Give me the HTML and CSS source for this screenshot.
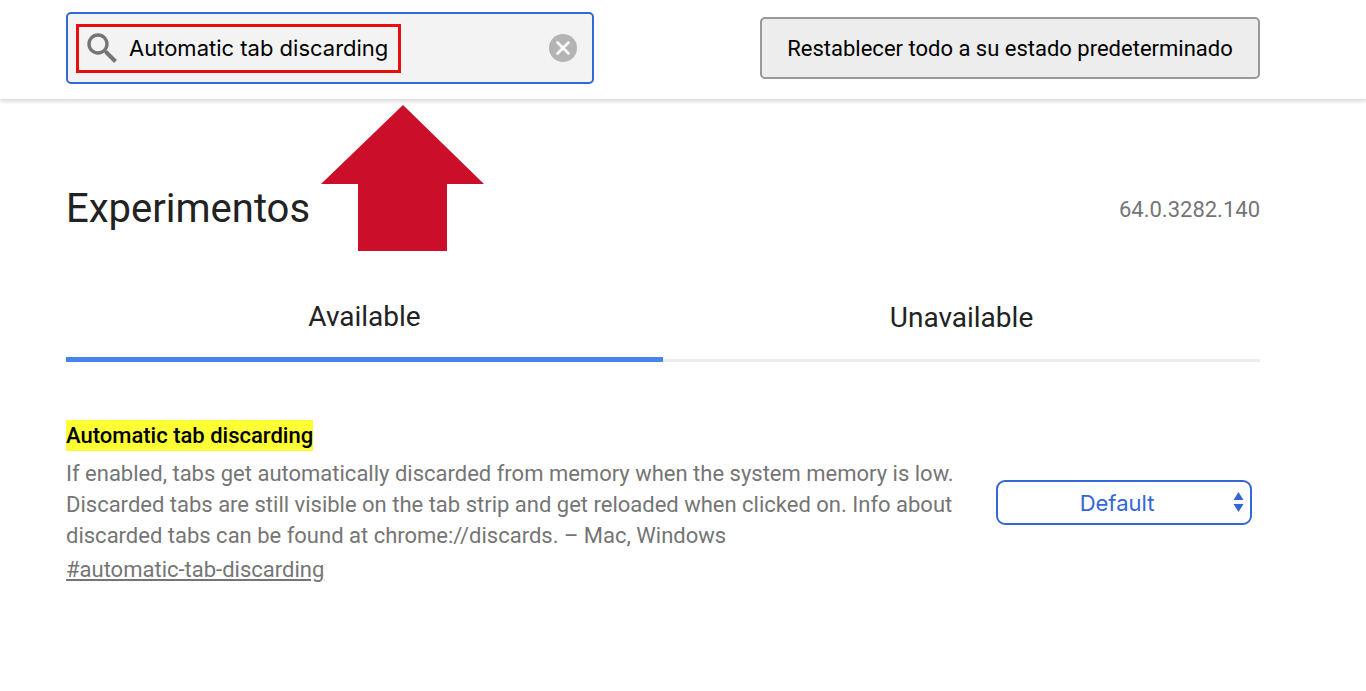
FILE: index.html
```html
<!DOCTYPE html>
<html lang="es">
<head>
  <meta charset="UTF-8">
  <meta name="viewport" content="width=device-width, initial-scale=1">
  <title>Experimentos</title>
  <link rel="stylesheet" href="styles.css">
</head>
<body>
  <header class="toolbar">
    <div class="search">
      <svg class="search-icon" viewBox="0 0 30 30" aria-hidden="true">
        <circle cx="11" cy="11" r="9" fill="none" stroke="#757575" stroke-width="3.4"/>
        <path d="M17 17L20 20" stroke="#757575" stroke-width="3"/>
        <path d="M19 19L28.500 28.500" stroke="#757575" stroke-width="4"/>
      </svg>
      <input type="text" id="search" class="search-input" aria-label="Buscar experimentos" value="Automatic tab discarding">
      <button type="button" class="clear-search" aria-label="Borrar">
        <svg viewBox="0 0 28 28" aria-hidden="true">
          <circle cx="14" cy="14" r="14" fill="#b4b4b4"/>
          <path d="M8.500 8.500L19.500 19.500M19.500 8.500L8.500 19.500" stroke="#fff" stroke-width="2.600" stroke-linecap="round"/>
        </svg>
      </button>
      <div class="highlight-box"></div>
      <svg class="arrow" viewBox="0 0 163 146" aria-hidden="true">
        <path d="M82 0L163 79H126V146H37V79H0Z" fill="#cb0e29"/>
      </svg>
    </div>
    <button type="button" class="reset">Restablecer todo a su estado predeterminado</button>
  </header>

  <main class="content">
    <div class="title-row">
      <h1>Experimentos</h1>
      <span class="version">64.0.3282.140</span>
    </div>

    <div class="tabs" role="tablist">
      <button type="button" class="tab selected" role="tab" aria-selected="true">Available</button>
      <button type="button" class="tab" role="tab" aria-selected="false">Unavailable</button>
    </div>

    <section class="experiment">
      <div class="experiment-text">
        <h2><label for="experiment-state"><mark>Automatic tab discarding</mark></label></h2>
        <p>If enabled, tabs get automatically discarded from memory when the system memory is low. Discarded tabs are still visible on the tab strip and get reloaded when clicked on. Info about discarded tabs can be found at chrome://discards. – Mac, Windows</p>
        <a href="#automatic-tab-discarding" class="permalink">#automatic-tab-discarding</a>
      </div>
      <div class="select-wrap">
        <select id="experiment-state">
          <option selected>Default</option>
          <option>Enabled</option>
          <option>Disabled</option>
        </select>
        <svg class="select-arrows" viewBox="0 0 10 20" aria-hidden="true">
          <path d="M5 0L10 8H0ZM5 20L10 12H0Z" fill="#3367d6"/>
        </svg>
      </div>
    </section>
  </main>
</body>
</html>
```
FILE: styles.css
```css
* {
  box-sizing: border-box;
}

body {
  margin: 0;
  background: #fff;
  color: #222;
  font-family: Roboto, "Liberation Sans", sans-serif;
  font-size: 22px;
}

button,
input,
select {
  margin: 0;
  font-family: inherit;
  font-size: inherit;
}

.toolbar {
  display: flex;
  align-items: center;
  justify-content: space-between;
  gap: 24px;
  padding: 12px 106px 15px 66px;
  box-shadow: 0 3px 3px rgba(0, 0, 0, 0.12);
}

.search {
  position: relative;
  display: flex;
  align-items: center;
  gap: 12px;
  flex: 0 1 528px;
  height: 72px;
  padding: 0 15px 0 19px;
  border: 2px solid #3367d6;
  border-radius: 5px;
  background: #f3f3f3;
}

.search-icon {
  flex: none;
  width: 30px;
  height: 30px;
}

.search-input {
  flex: 1;
  min-width: 0;
  padding: 0;
  border: 0;
  outline: none;
  background: none;
  color: #000;
  font-family: Inter, "Liberation Sans", sans-serif;
}

.clear-search {
  flex: none;
  width: 28px;
  height: 28px;
  padding: 0;
  border: 0;
  background: none;
}

.clear-search svg {
  display: block;
}

.highlight-box {
  position: absolute;
  top: 10px;
  left: 8px;
  width: 325px;
  height: 49px;
  border: 3px solid #e90e0e;
  pointer-events: none;
}

.arrow {
  position: absolute;
  top: 91px;
  left: 253px;
  width: 163px;
  height: 146px;
  pointer-events: none;
}

.reset {
  min-width: 500px;
  height: 62px;
  padding: 0 20px;
  border: 2px solid #999;
  border-radius: 5px;
  background: #ededed;
  color: #000;
}

.content {
  padding: 80px 106px 40px 66px;
}

.title-row {
  display: flex;
  align-items: center;
  justify-content: space-between;
}

h1 {
  margin: 0;
  font-size: 40px;
  font-weight: 400;
  line-height: 60px;
}

.version {
  color: #757575;
}

.tabs {
  display: flex;
  margin-top: 33px;
}

.tab {
  flex: 1;
  height: 90px;
  padding: 4px 0 0;
  border: 0;
  border-bottom: 3px solid #ececec;
  background: none;
  color: #222;
  font-size: 28px;
}

.tab.selected {
  border-bottom: 5px solid #4683ea;
}

.experiment {
  display: flex;
  align-items: center;
  gap: 16px;
  margin-top: 58px;
  padding-right: 8px;
  color: #757575;
}

.experiment-text {
  flex: 1;
}

h2 {
  margin: 0;
  font-size: 22px;
  font-weight: 500;
  line-height: 31px;
}

mark {
  display: inline-block;
  background: #fdff34;
  color: #000;
}

p {
  margin: 7px 0 3px;
  line-height: 31px;
}

.permalink {
  color: inherit;
  line-height: 31px;
}

.select-wrap {
  position: relative;
  flex: none;
  width: 256px;
}

select {
  display: block;
  width: 100%;
  height: 45px;
  padding: 0 14px 0 0;
  border: 2px solid #3367d6;
  border-radius: 9px;
  background: #fff;
  color: #3367d6;
  font-family: Inter, "Liberation Sans", sans-serif;
  appearance: none;
  text-align-last: center;
}

.select-arrows {
  position: absolute;
  top: 12px;
  right: 8px;
  width: 11px;
  height: 20px;
  pointer-events: none;
}
```
